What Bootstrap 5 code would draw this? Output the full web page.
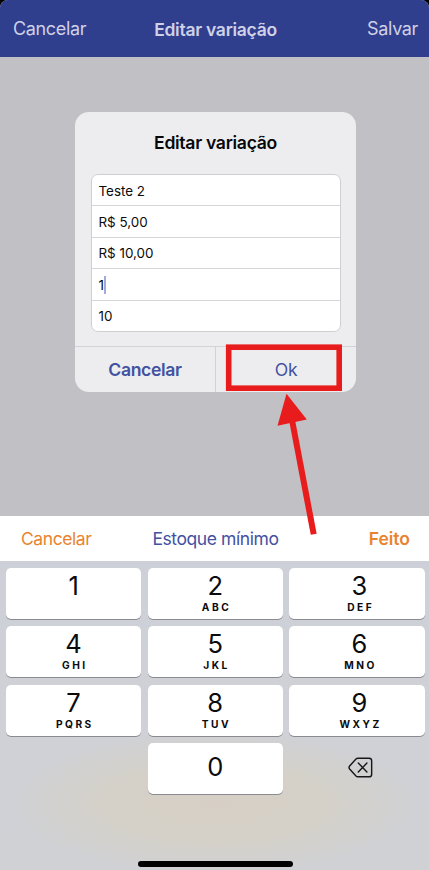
<!DOCTYPE html>
<html lang="pt-BR">
<head>
<meta charset="utf-8">
<meta name="viewport" content="width=device-width, initial-scale=1">
<title>Editar variação</title>
<link href="https://cdn.jsdelivr.net/npm/bootstrap@5.3.0/dist/css/bootstrap.min.css" rel="stylesheet">
<style>
  body { font-family: Inter, "Liberation Sans", sans-serif; background: #000; color: #0b0b0d; height: 870px; overflow: hidden; line-height: 1.2; }
  .screen { height: 870px; background: #c1c0c5; border-radius: 8px 8px 0 0; overflow: hidden; }
  .topbar { height: 57px; background: #303e8e; color: #cfd1e6; padding: 1px 11px 0 13px; font-size: 18px; letter-spacing: -.35px; }
  .topbar .side { flex: 1 1 0; }
  .topbar .heading { font-size: 17.5px; font-weight: 600; padding-top: 1px; letter-spacing: -.27px; }
  .stage { height: 459px; padding: 54.5px 73px 0 75px; }
  .dialog { height: 280.5px; background: #ededf0; border-radius: 14px; overflow: hidden; }
  .dialog h1 { font-size: 17.6px; font-weight: 600; height: 62.5px; padding-top: 20px; color: #08080a; letter-spacing: -.3px; }
  .fields { margin: 0 15.5px 0 16px; height: 158px; border: 1px solid #cfcfd3; border-radius: 7px; background: #fff; font-size: 13.4px; }
  .field { flex: 1 1 0; padding: 1px 6.5px 0; }
  .field + .field { border-top: 1px solid #d6d6d9; }
  .caret { width: 2px; height: 18px; background: #a3a9d9; }
  .actions { margin-top: 14px; border-top: 1px solid #d2d2d6; color: #4351a1; font-size: 17.6px; letter-spacing: -.35px; }
  .actions > * { flex: 1 1 0; }
  .actions > * + * { border-left: 1px solid #d2d2d6; }
  .accessory { height: 45px; background: #fff; padding: 0 19px 0 21px; font-size: 17.5px; letter-spacing: -.42px; }
  .accessory .side { flex: 1 1 0; color: #e88430; }
  .accessory .side.fw-semibold { letter-spacing: 0; }
  .accessory .name { color: #4351a1; }
  .keypad { height: 309px; padding: 7px 4.5px 0 6px;
    background:
      radial-gradient(ellipse 205px 72px at 50% 242px, #d7cfc6 0, #d5d1c8 50%, rgba(210,208,205,0) 100%),
      linear-gradient(#cdd0d8, #d0d1d6 60%, #d0d1d5); }
  .keys { display: grid; grid-template-columns: repeat(3, 1fr); grid-auto-rows: 51px; gap: 7.4px 6.5px; }
  .key { background: #fff; border-radius: 5px; box-shadow: 0 1px 0 #898b90; padding-top: 2px; }
  .key:nth-child(3n) { padding-left: 5px; }
  .digit { font-size: 25.5px; line-height: 31px; }
  .letters { font-size: 10.2px; font-weight: 700; letter-spacing: 2.5px; line-height: 12px; margin-right: -2.5px; }
  .erase { padding: 0 0 2px 6.5px; }
  .home { left: 138px; top: 860.5px; width: 155px; height: 6px; border-radius: 3px; background: #000; }
  .callout { left: 0; top: 0; pointer-events: none; }
</style>
<script src="https://cdn.jsdelivr.net/npm/bootstrap@5.3.0/dist/js/bootstrap.bundle.min.js"></script>
</head>
<body class="position-relative">
<div class="screen d-flex flex-column">
  <header class="topbar d-flex align-items-center flex-shrink-0">
    <div class="side">Cancelar</div>
    <div class="heading">Editar variação</div>
    <div class="side text-end">Salvar</div>
  </header>
  <main class="stage flex-shrink-0">
    <section class="dialog d-flex flex-column">
      <h1 class="text-center m-0">Editar variação</h1>
      <div class="fields d-flex flex-column overflow-hidden">
        <div class="field d-flex align-items-center">Teste 2</div>
        <div class="field d-flex align-items-center">R$ 5,00</div>
        <div class="field d-flex align-items-center">R$ 10,00</div>
        <div class="field d-flex align-items-center">1<span class="caret"></span></div>
        <div class="field d-flex align-items-center">10</div>
      </div>
      <div class="actions d-flex flex-grow-1">
        <div class="d-flex align-items-center justify-content-center fw-semibold">Cancelar</div>
        <div class="d-flex align-items-center justify-content-center">Ok</div>
      </div>
    </section>
  </main>
  <div class="accessory d-flex align-items-center flex-shrink-0">
    <div class="side">Cancelar</div>
    <div class="name">Estoque mínimo</div>
    <div class="side text-end fw-semibold">Feito</div>
  </div>
  <div class="keypad flex-shrink-0">
    <div class="keys text-center">
      <div class="key"><div class="digit">1</div></div>
      <div class="key"><div class="digit">2</div><div class="letters">ABC</div></div>
      <div class="key"><div class="digit">3</div><div class="letters">DEF</div></div>
      <div class="key"><div class="digit">4</div><div class="letters">GHI</div></div>
      <div class="key"><div class="digit">5</div><div class="letters">JKL</div></div>
      <div class="key"><div class="digit">6</div><div class="letters">MNO</div></div>
      <div class="key"><div class="digit">7</div><div class="letters">PQRS</div></div>
      <div class="key"><div class="digit">8</div><div class="letters">TUV</div></div>
      <div class="key"><div class="digit">9</div><div class="letters">WXYZ</div></div>
      <div></div>
      <div class="key d-flex align-items-center justify-content-center pt-0 pb-1"><div class="digit">0</div></div>
      <div class="erase d-flex align-items-center justify-content-center">
        <svg width="25" height="22" viewBox="0 0 26 22" preserveAspectRatio="none" fill="none" stroke="#18181a" stroke-width="1.5" stroke-linecap="round" stroke-linejoin="round"><path d="M10.200 1.200H22a2.600 2.600 0 0 1 2.600 2.600v13.400a2.600 2.600 0 0 1-2.600 2.600H10.200q-1.100 0-1.900-.8L1.700 12q-1.300-1.500 0-3L8.300 2q.8-.8 1.900-.8z"/><path d="M10.700 6l9 9M19.700 6l-9 9"/></svg>
      </div>
    </div>
  </div>
</div>
<div class="home position-absolute"></div>
<svg class="callout position-absolute" width="429" height="870" viewBox="0 0 429 870">
  <rect x="228.700" y="347.200" width="110.500" height="41" fill="none" stroke="#e81c1d" stroke-width="5.600"/>
  <path d="M292.200 421L313.700 534.200" stroke="#e81c1d" stroke-width="6"/>
  <path d="M286.500 393.800L306.800 419.600L277.500 425.800z" fill="#e81c1d"/>
</svg>
</body>
</html>
